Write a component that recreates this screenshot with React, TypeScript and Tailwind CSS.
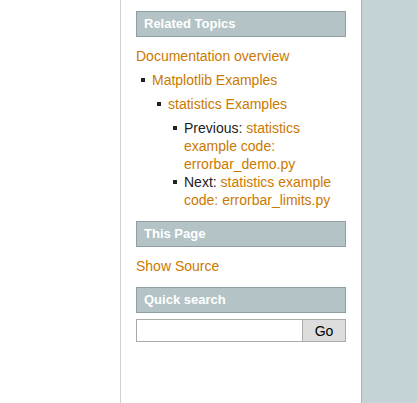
export default function App() {
  const link = "text-[#ca7900]";
  const Header = ({ title }: { title: string }) => (
    <div className="h-[26px] border border-[#8e9fa3] bg-[#b3c3c6] pl-[7px] text-[13px] font-bold leading-[24px] text-white">
      {title}
    </div>
  );
  const Bullet = () => <span className="mt-[7px] h-[4px] w-[4px] shrink-0 bg-[#222]" />;

  return (
    <div
      className="flex h-[403px] w-[417px] bg-white text-[14px] leading-[18px] text-[#222]"
      style={{ fontFamily: '"Liberation Sans", Arial, sans-serif' }}
    >
      <div className="w-[120px] shrink-0" />
      <div className="w-[242px] shrink-0 border-x border-l-[#d0d0d0] border-r-[#a6b2b4] px-[15px] pt-[11px]">
        <Header title="Related Topics" />
        <div className={`mt-[10px] ${link}`}>Documentation overview</div>
        <div className="mt-[6px] flex gap-[7px] pl-[5px]">
          <Bullet />
          <div>
            <div className={link}>Matplotlib Examples</div>
            <div className="mt-[6px] flex gap-[7px] pl-[5px]">
              <Bullet />
              <div>
                <div className={link}>statistics Examples</div>
                <div className="mt-[6px] flex gap-[7px] pl-[5px]">
                  <Bullet />
                  <div>
                    Previous: <span className={link}>statistics example code: errorbar_demo.py</span>
                  </div>
                </div>
                <div className="flex gap-[7px] pl-[5px]">
                  <Bullet />
                  <div>
                    Next: <span className={link}>statistics example code: errorbar_limits.py</span>
                  </div>
                </div>
              </div>
            </div>
          </div>
        </div>
        <div className="mt-[12px]">
          <Header title="This Page" />
        </div>
        <div className={`mt-[10px] ${link}`}>Show Source</div>
        <div className="mt-[12px]">
          <Header title="Quick search" />
        </div>
        <div className="mt-[6px] flex h-[23px]">
          <input type="text" className="h-full min-w-0 flex-1 border border-[#aaa] bg-white outline-none" />
          <button className="h-full w-[43px] border border-l-0 border-[#aaa] bg-[#dddddd] text-[14px] text-black">
            Go
          </button>
        </div>
      </div>
      <div className="flex-1 bg-[#c4d3d6]" />
    </div>
  );
}
